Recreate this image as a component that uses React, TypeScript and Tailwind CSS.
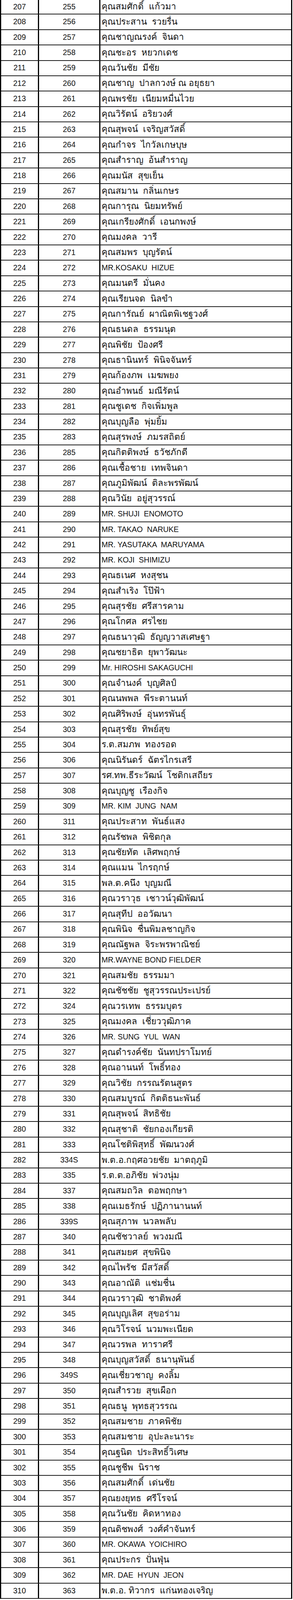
import React from "react";

const rows: [string, string, string][] = [
  ["207", "255", "คุณสมศักดิ์  แก้วมา"],
  ["208", "256", "คุณประสาน  รวยรื่น"],
  ["209", "257", "คุณชาญณรงค์  จินดา"],
  ["210", "258", "คุณชะอร  หยวกเดช"],
  ["211", "259", "คุณวันชัย  มีชัย"],
  ["212", "260", "คุณชาญ  ปาลกวงษ์ ณ อยุธยา"],
  ["213", "261", "คุณพรชัย  เนียมหมื่นไวย"],
  ["214", "262", "คุณวิรัตน์  อริยวงศ์"],
  ["215", "263", "คุณสุพจน์  เจริญสวัสดิ์"],
  ["216", "264", "คุณกำจร  ไกวัลเกษบุษ"],
  ["217", "265", "คุณสำราญ  อ้นสำราญ"],
  ["218", "266", "คุณมนัส  สุขเย็น"],
  ["219", "267", "คุณสมาน  กลิ่นเกษร"],
  ["220", "268", "คุณการุณ  นิยมทรัพย์"],
  ["221", "269", "คุณเกรียงศักดิ์  เอนกพงษ์"],
  ["222", "270", "คุณมงคล  วารี"],
  ["223", "271", "คุณสมพร  บุญรัตน์"],
  ["224", "272", "MR.KOSAKU  HIZUE"],
  ["225", "273", "คุณมนตรี  มั่นคง"],
  ["226", "274", "คุณเรียนจด  นิลขำ"],
  ["227", "275", "คุณการัณย์  ผาณิตพิเชฐวงศ์"],
  ["228", "276", "คุณธนดล  ธรรมนุต"],
  ["229", "277", "คุณพิชัย  ป้องศรี"],
  ["230", "278", "คุณธานินทร์  พินิจจันทร์"],
  ["231", "279", "คุณก้องภพ  เมฆพยง"],
  ["232", "280", "คุณอำพนธ์  มณีรัตน์"],
  ["233", "281", "คุณชูเดช  กิจเพิ่มพูล"],
  ["234", "282", "คุณบุญลือ  พุ่มยิ้ม"],
  ["235", "283", "คุณสุรพงษ์  ภมรสถิตย์"],
  ["236", "285", "คุณกิตติพงษ์  ธวัชภักดี"],
  ["237", "286", "คุณเชื้อชาย  เทพจินดา"],
  ["238", "287", "คุณภูมิพัฒน์  ติละพรพัฒน์"],
  ["239", "288", "คุณวินัย  อยู่สุวรรณ์"],
  ["240", "289", "MR. SHUJI  ENOMOTO"],
  ["241", "290", "MR. TAKAO  NARUKE"],
  ["242", "291", "MR. YASUTAKA  MARUYAMA"],
  ["243", "292", "MR. KOJI  SHIMIZU"],
  ["244", "293", "คุณธเนศ  หงสุชน"],
  ["245", "294", "คุณสำเริง  โป๊ฟ้า"],
  ["246", "295", "คุณสุรชัย  ศรีสารคาม"],
  ["247", "296", "คุณโกศล  ศรไชย"],
  ["248", "297", "คุณธนาวุฒิ  ธัญญวาสเศษฐา"],
  ["249", "298", "คุณชยาธิต  ยุพาวัฒนะ"],
  ["250", "299", "Mr. HIROSHI SAKAGUCHI"],
  ["251", "300", "คุณจำนงค์  บุญศิลป์"],
  ["252", "301", "คุณนพพล  พีระตานนท์"],
  ["253", "302", "คุณศิริพงษ์  อุ่นทรพันธุ์"],
  ["254", "303", "คุณสุรชัย  ทิพย์สุข"],
  ["255", "304", "ร.ต.สมภพ  ทองรอด"],
  ["256", "306", "คุณนิรันดร์  ฉัตรไกรเสรี"],
  ["257", "307", "รศ.ทพ.ธีระวัฒน์  โชติกเสถียร"],
  ["258", "308", "คุณบุญชู  เรืองกิจ"],
  ["259", "309", "MR. KIM  JUNG  NAM"],
  ["260", "311", "คุณประสาท  พันธ์แสง"],
  ["261", "312", "คุณรัชพล  พิชิตกุล"],
  ["262", "313", "คุณชัยทัต  เลิศพฤกษ์"],
  ["263", "314", "คุณแมน  ไกรฤกษ์"],
  ["264", "315", "พล.ต.คนึง  บุญมณี"],
  ["265", "316", "คุณวราวุธ  เชาวน์วุฒิพัฒน์"],
  ["266", "317", "คุณสุทีป  ออวัฒนา"],
  ["267", "318", "คุณพินิจ  ชื่นพิมลชาญกิจ"],
  ["268", "319", "คุณณัฐพล  จิระพรพาณิชย์"],
  ["269", "320", "MR.WAYNE BOND FIELDER"],
  ["270", "321", "คุณสมชัย  ธรรมมา"],
  ["271", "322", "คุณชัชชัย  ชูสุวรรณประเปรย์"],
  ["272", "324", "คุณวรเทพ  ธรรมบุตร"],
  ["273", "325", "คุณมงคล  เชี่ยววุฒิภาค"],
  ["274", "326", "MR. SUNG  YUL  WAN"],
  ["275", "327", "คุณดำรงค์ชัย  นันทปราโมทย์"],
  ["276", "328", "คุณอานนท์  โพธิ์ทอง"],
  ["277", "329", "คุณวิชัย  กรรณรัตนสูตร"],
  ["278", "330", "คุณสมบูรณ์  กิตติธนะพันธ์"],
  ["279", "331", "คุณสุพจน์  สิทธิชัย"],
  ["280", "332", "คุณสุชาติ  ชัยกองเกียรติ"],
  ["281", "333", "คุณโชติพิสุทธิ์  พัฒนวงศ์"],
  ["282", "334S", "พ.ต.อ.กฤศอวยชัย  มาตฤภูมิ"],
  ["283", "335", "ร.ต.ต.อภิชัย  พ่วงนุ่ม"],
  ["284", "337", "คุณสมถวิล  ตอพฤกษา"],
  ["285", "338", "คุณเมธรักษ์  ปฏิภานานนท์"],
  ["286", "339S", "คุณสุภาพ  นวลพลับ"],
  ["287", "340", "คุณชัชวาลย์  พวงมณี"],
  ["288", "341", "คุณสมยศ  สุขพินิจ"],
  ["289", "342", "คุณไพรัช  มีสวัสดิ์"],
  ["290", "343", "คุณอาณัติ  แช่มชื่น"],
  ["291", "344", "คุณวราวุฒิ  ชาติพงศ์"],
  ["292", "345", "คุณบุญเลิศ  สุขอร่าม"],
  ["293", "346", "คุณวิโรจน์  นวมพะเนียด"],
  ["294", "347", "คุณวรพล  ทาราศรี"],
  ["295", "348", "คุณบุญสวัสดิ์  ธนานุพันธ์"],
  ["296", "349S", "คุณเชี่ยวชาญ  คงลิ้ม"],
  ["297", "350", "คุณสำรวย  สุขเผือก"],
  ["298", "351", "คุณธนู  พุทธสุวรรณ"],
  ["299", "352", "คุณสมชาย  ภาคพิชัย"],
  ["300", "353", "คุณสมชาย  อุปะละนาระ"],
  ["301", "354", "คุณฐนิต  ประสิทธิ์วิเศษ"],
  ["302", "355", "คุณชูชีพ  นิราช"],
  ["303", "356", "คุณสมศักดิ์  เด่นชัย"],
  ["304", "357", "คุณยงยุทธ  ศรีโรจน์"],
  ["305", "358", "คุณวันชัย  คิดหาทอง"],
  ["306", "359", "คุณดิชพงศ์  วงศ์คำจันทร์"],
  ["307", "360", "MR. OKAWA  YOICHIRO"],
  ["308", "361", "คุณประกร  ปั่นฟุ่น"],
  ["309", "362", "MR. DAE  HYUN  JEON"],
  ["310", "363", "พ.ต.อ. ทิวากร  แก่นทองเจริญ"],
];

const thai = /[\u0E00-\u0E7F]/;

export default function App() {
  return (
    <div className="bg-white w-[750px] h-screen overflow-hidden">
      <div
        className="w-[748px] border-l-[3px] border-r-[3px] border-black text-[19.5px] leading-none text-[#111]"
        style={{ fontFamily: '"Liberation Sans", Arial, "Noto Sans", sans-serif' }}
      >
        {rows.map(([a, b, name], i) => (
          <div
            key={a}
            className={
              "flex items-center overflow-hidden border-b-2 border-[#1c1c1c] " +
              (i === 0 ? "h-[calc(100vh/104-2px)]" : "h-[calc(100vh/104)]")
            }
          >
            <div className="w-[97px] h-full flex items-center justify-center border-r-[3px] border-black">
              {a}
            </div>
            <div className="w-[157px] h-full flex items-center justify-center border-r-[3px] border-black">
              {b}
            </div>
            <div
              className={
                "flex-1 h-full flex items-center pl-[3px] whitespace-pre " +
                (thai.test(name) ? "text-[22.5px]" : "text-[19.5px]")
              }
            >
              {name}
            </div>
          </div>
        ))}
      </div>
    </div>
  );
}
